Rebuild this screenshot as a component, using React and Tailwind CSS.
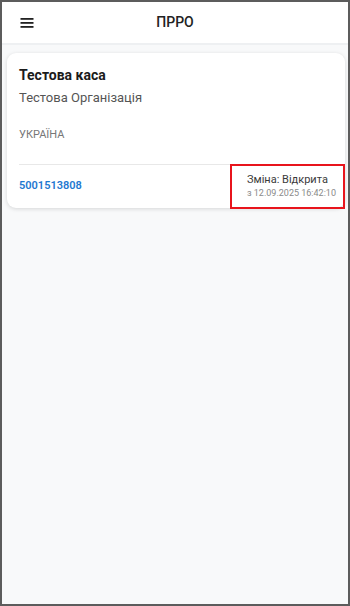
export default function App() {
  return (
    <div className="w-[350px] h-[606px] border-2 border-[#5c5c5c] bg-[#f8f9fa] flex flex-col font-['Roboto',sans-serif] overflow-hidden">
      {/* Header */}
      <header className="relative h-[43px] shrink-0 bg-white border-b-2 border-[#eef0f2] flex items-center">
        <button className="ml-[18px] w-[14px] h-[14px] flex items-center justify-center">
          <svg width="14" height="10" viewBox="0 0 14 10" fill="#222">
            <rect x="0.5" y="0" width="13" height="1.8" />
            <rect x="0.5" y="4" width="13" height="1.8" />
            <rect x="0.5" y="8" width="13" height="1.8" />
          </svg>
        </button>
        <h1 className="absolute left-0 right-0 text-center text-[14px] font-medium text-[#222] pointer-events-none">
          ПРРО
        </h1>
      </header>

      {/* Card */}
      <div className="ml-[5px] mr-[3px] mt-[8px] bg-white rounded-[9px] shadow-[0_1px_4px_rgba(0,0,0,0.14)]">
        <div className="px-3 pt-3">
          <div className="text-[14px] leading-5 font-bold text-[#1b1b1b]">Тестова каса</div>
          <div className="mt-[3px] text-[13px] leading-5 text-[#555]">Тестова Організація</div>
          <div className="mt-[19px] text-[11px] leading-4 text-[#777]">УКРАЇНА</div>
        </div>
        <div className="mx-3 mt-[21px] h-px bg-[#e8e8e8]" />
        <div className="flex items-center justify-between h-[44px] -mt-px">
          <span className="pl-3 text-[11px] font-semibold text-[#1e78d0]">5001513808</span>
          <div className="w-[115px] h-[45px] border-2 border-[#e8141c] pl-[15px] flex flex-col justify-center">
            <span className="text-[11px] leading-[14px] text-[#3a3a3a]">Зміна: Відкрита</span>
            <span className="text-[9px] leading-[13px] text-[#8a8a8a]">з 12.09.2025 16:42:10</span>
          </div>
        </div>
      </div>
    </div>
  );
}
